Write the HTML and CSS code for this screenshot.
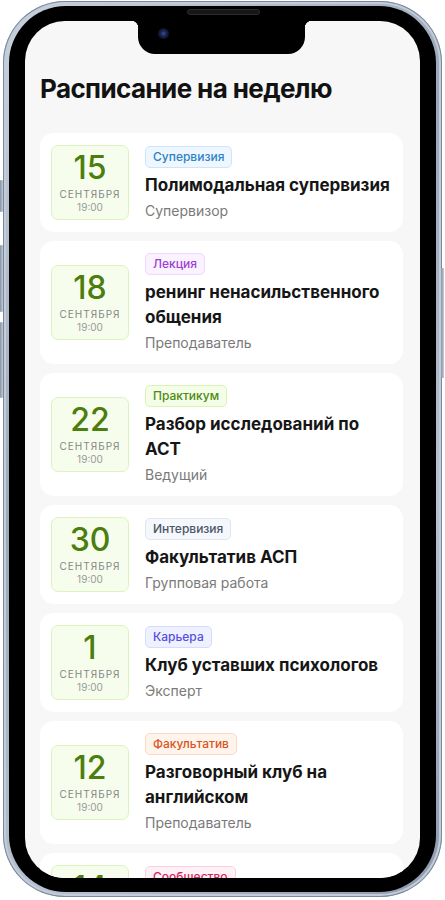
FILE: index.html
```html
<!DOCTYPE html>
<html lang="ru">

<head>
    <meta charset="UTF-8">
    <meta name="viewport" content="width=device-width, initial-scale=1.0">
    <title>Расписание на неделю</title>
    <link rel="stylesheet" href="styles.css">
</head>

<body>

    <div class="phone">
        <span class="side-btn btn-mute"></span>
        <span class="side-btn btn-vol-up"></span>
        <span class="side-btn btn-vol-down"></span>
        <span class="side-btn btn-power"></span>

        <div class="bezel">
            <div class="speaker"></div>

            <div class="screen">
                <div class="notch"><span class="camera"></span></div>

                <div class="content">
                    <h1 class="page-title">Расписание на неделю</h1>

                    <div class="event-list">

                        <div class="event-card">
                            <div class="date-box">
                                <div class="date-day">15</div>
                                <div class="date-month">Сентября</div>
                                <div class="date-time">19:00</div>
                            </div>
                            <div class="event-info">
                                <span class="tag tag-blue">Супервизия</span>
                                <div class="event-title">Полимодальная супервизия</div>
                                <div class="event-role">Супервизор</div>
                            </div>
                        </div>

                        <div class="event-card">
                            <div class="date-box">
                                <div class="date-day">18</div>
                                <div class="date-month">Сентября</div>
                                <div class="date-time">19:00</div>
                            </div>
                            <div class="event-info">
                                <span class="tag tag-purple">Лекция</span>
                                <div class="event-title">ренинг ненасильственного общения</div>
                                <div class="event-role">Преподаватель</div>
                            </div>
                        </div>

                        <div class="event-card">
                            <div class="date-box">
                                <div class="date-day">22</div>
                                <div class="date-month">Сентября</div>
                                <div class="date-time">19:00</div>
                            </div>
                            <div class="event-info">
                                <span class="tag tag-green">Практикум</span>
                                <div class="event-title">Разбор исследований по АСТ</div>
                                <div class="event-role">Ведущий</div>
                            </div>
                        </div>

                        <div class="event-card">
                            <div class="date-box">
                                <div class="date-day">30</div>
                                <div class="date-month">Сентября</div>
                                <div class="date-time">19:00</div>
                            </div>
                            <div class="event-info">
                                <span class="tag tag-slate">Интервизия</span>
                                <div class="event-title">Факультатив АСП</div>
                                <div class="event-role">Групповая работа</div>
                            </div>
                        </div>

                        <div class="event-card">
                            <div class="date-box">
                                <div class="date-day">1</div>
                                <div class="date-month">Сентября</div>
                                <div class="date-time">19:00</div>
                            </div>
                            <div class="event-info">
                                <span class="tag tag-indigo">Карьера</span>
                                <div class="event-title">Клуб уставших психологов</div>
                                <div class="event-role">Эксперт</div>
                            </div>
                        </div>

                        <div class="event-card">
                            <div class="date-box">
                                <div class="date-day">12</div>
                                <div class="date-month">Сентября</div>
                                <div class="date-time">19:00</div>
                            </div>
                            <div class="event-info">
                                <span class="tag tag-orange">Факультатив</span>
                                <div class="event-title">Разговорный клуб на английском</div>
                                <div class="event-role">Преподаватель</div>
                            </div>
                        </div>

                        <div class="event-card">
                            <div class="date-box">
                                <div class="date-day">14</div>
                                <div class="date-month">Сентября</div>
                                <div class="date-time">19:00</div>
                            </div>
                            <div class="event-info">
                                <span class="tag tag-pink">Сообщество</span>
                                <div class="event-title">Встреча сообщества</div>
                                <div class="event-role">Ведущий</div>
                            </div>
                        </div>

                    </div>
                </div>
            </div>
        </div>
    </div>

</body>

</html>
```

FILE: styles.css
```css
body {
    margin: 0;
    padding: 0;
    background-color: #fff;
    font-family: 'Inter', 'Noto Sans', sans-serif;
}

/* phone frame */
.phone {
    position: relative;
    width: 439px;
    height: 896px;
    margin: 1px 3px 0;
    padding: 5px 6px;
    box-sizing: border-box;
    border-radius: 62px;
    background: linear-gradient(135deg, #c9d2de 0%, #9ba8ba 40%, #b7c2d1 70%, #8d9aac 100%);
    box-shadow: inset 0 0 0 1px #7b889a, inset 0 0 0 3px #c3ccd8;
}

.side-btn {
    position: absolute;
    width: 3px;
    border-radius: 1px;
    background: linear-gradient(90deg, #8794a6, #c2cbd7);
}

.btn-mute {
    left: -3px;
    top: 179px;
    height: 32px;
}

.btn-vol-up {
    left: -3px;
    top: 244px;
    height: 67px;
}

.btn-vol-down {
    left: -3px;
    top: 321px;
    height: 76px;
}

.btn-power {
    right: -2px;
    top: 267px;
    height: 110px;
}

.bezel {
    position: relative;
    height: 100%;
    padding: 15px 16px 14px;
    box-sizing: border-box;
    border-radius: 57px;
    background-color: #000;
}

.speaker {
    position: absolute;
    left: 178px;
    top: 3px;
    width: 71px;
    height: 4px;
    border-radius: 3px;
    background-color: #161616;
    border: 1px solid #2c2c2c;
}

.screen {
    position: relative;
    height: 100%;
    overflow: hidden;
    border-radius: 40px;
    background-color: #f7f7f7;
}

.notch {
    position: absolute;
    left: 113px;
    top: 0;
    width: 167px;
    height: 33px;
    border-radius: 0 0 17px 17px;
    background-color: #000;
    z-index: 2;
}

.notch::before,
.notch::after {
    content: '';
    position: absolute;
    top: 0;
    width: 7px;
    height: 7px;
}

.notch::before {
    left: -7px;
    background: radial-gradient(circle at 0 100%, transparent 7px, #000 7.5px);
}

.notch::after {
    right: -7px;
    background: radial-gradient(circle at 100% 100%, transparent 7px, #000 7.5px);
}

.camera {
    position: absolute;
    left: 20px;
    top: 7px;
    width: 11px;
    height: 11px;
    border-radius: 50%;
    background: radial-gradient(circle, #3b4f9a 0%, #1d2552 35%, #0b0d1a 75%);
}

/* page */
.content {
    padding: 52px 17px 0 15px;
}

.page-title {
    margin: 0 0 28px;
    font-size: 26px;
    line-height: 32px;
    font-weight: 700;
    color: #121212;
    letter-spacing: -0.6px;
}

.event-list {
    display: flex;
    flex-direction: column;
    gap: 9px;
}

.event-card {
    display: flex;
    align-items: center;
    gap: 16px;
    padding: 12px 12px 12px 11px;
    border-radius: 14px;
    background-color: #fff;
}

.date-box {
    flex: none;
    display: flex;
    flex-direction: column;
    align-items: center;
    justify-content: center;
    width: 78px;
    height: 75px;
    box-sizing: border-box;
    border: 1px solid #dcf3bd;
    border-radius: 7px;
    background-color: #f6fdec;
}

.date-day {
    font-size: 32px;
    line-height: 34px;
    font-weight: 500;
    color: #4b7d0f;
}

.date-month {
    margin-top: 3px;
    font-size: 10px;
    line-height: 13px;
    text-transform: uppercase;
    letter-spacing: 1px;
    color: #858585;
}

.date-time {
    font-size: 10px;
    line-height: 13px;
    color: #999;
}

.event-info {
    display: flex;
    flex-direction: column;
    align-items: flex-start;
}

.tag {
    padding: 0 7px;
    font-size: 12px;
    line-height: 20px;
    font-weight: 500;
    border: 1px solid;
    border-radius: 5px;
}

.tag-blue {
    color: #2b83c4;
    background-color: #eef7ff;
    border-color: #cfe4fb;
}

.tag-purple {
    color: #9b3fd6;
    background-color: #fbf2ff;
    border-color: #eed8fb;
}

.tag-green {
    color: #4d8a12;
    background-color: #f4fde8;
    border-color: #d8f3b2;
}

.tag-slate {
    color: #4a5668;
    background-color: #f4f7fb;
    border-color: #dfe6ef;
}

.tag-indigo {
    color: #5a4ddd;
    background-color: #eef1ff;
    border-color: #d6dcfb;
}

.tag-orange {
    color: #d9551f;
    background-color: #fff4eb;
    border-color: #fbd9c3;
}

.tag-pink {
    color: #d1245f;
    background-color: #fff1f6;
    border-color: #f9d0e1;
}

.event-title {
    margin-top: 5px;
    font-size: 17px;
    line-height: 25px;
    font-weight: 700;
    color: #161616;
}

.event-role {
    margin-top: 4px;
    font-size: 14px;
    line-height: 18px;
    color: #7a7a7a;
}
```
